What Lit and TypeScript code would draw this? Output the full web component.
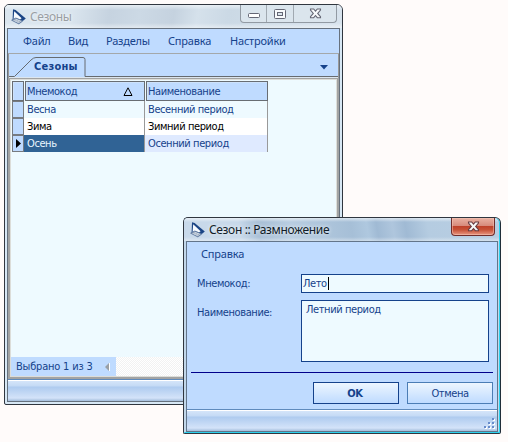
import { LitElement, html, css, svg } from "lit";
import { customElement } from "lit/decorators.js";

const logo = html`<svg class="logo" width="16" height="16" viewBox="0 0 16 16">
  <path d="M2 .3 4.6 1 14.8 9.4 10 13.6 1.6 11Z" fill="#1b4585"/>
  <path d="M3.2 2.2 10.6 9.2 9 10.4 5.6 9.2 2.6 10Z" fill="#f7fbff"/>
  <path d="M.6 11.2 4.8 9 11.6 11.8 8 15Z" fill="#93a3b8" stroke="#4d6c98" stroke-width=".7"/>
  <path d="M2.4 11.2 8.6 13.8M4.4 10.2l6 2.4M4.2 12.3l2.2-2M6.4 13.2l2.2-2" stroke="#e8eef5" stroke-width=".6"/>
</svg>`;

const cross = (fill: string, stroke: string) => html`<svg width="13" height="11" viewBox="0 0 13 11">
  <path d="M1.5 1h3.2l1.8 2.2L8.3 1h3.2v1L8.7 5.4l2.8 3.3v1H8.3L6.5 7.5 4.7 9.7H1.5v-1l2.8-3.3L1.5 2Z"
    fill=${fill} stroke=${stroke} stroke-width="1.1"/></svg>`;

const rows = [
  { code: "Весна", name: "Весенний период", kind: "odd" },
  { code: "Зима", name: "Зимний период", kind: "even" },
  { code: "Осень", name: "Осенний период", kind: "current" },
];

@customElement("app-root")
export class AppRoot extends LitElement {
  static styles = css`
    :host { display: block; position: relative; width: 508px; height: 442px; overflow: hidden;
      background: #fffbfa; color: #15428b; font: 11px/17px "DejaVu Sans Condensed", "DejaVu Sans", sans-serif; font-stretch: condensed; letter-spacing: -.4px; }
    * { box-sizing: border-box; }
    svg { display: block; }
    .window { position: absolute; display: flex; flex-direction: column; border: 1px solid #30363f; }
    .main { left: 4px; top: 4px; width: 339px; height: 401px; border-radius: 5px 6px 2px 2px; padding: 0 2px 2px;
      background: #d8e8f5; }
    .dialog { left: 183px; top: 217px; width: 318px; height: 217px; border-radius: 5px 6px 2px 2px; padding: 0 2px 1px;
      background: #c2d7ea; border-right-color: #202d38; box-shadow: inset -1px -1px #2bd2ef; }
    .title { display: flex; flex: none; height: 23px; margin: 0 -2px; padding-left: 6px; border-radius: 4px 5px 0 0; }
    .main .title { background: linear-gradient(#fff8 0, #fff0 5px 18px, #fff7), linear-gradient(100deg, #dae5ee 0 20%, #c6d3e0 31%, #ccd9e5 40%, #c5d2df 50%, #d5e1eb 57%, #cbd9e5 66%, #d8e3ed); }
    .dialog .title { box-shadow: inset -1px 0 #2bd2ef;
      background: linear-gradient(#fff9 0, #fff0 4px 19px, #fff6), linear-gradient(80deg, #c8d9ea 0 18%, #a7bed5 24%, #b8cde1 34%, #a6bfd7 53%, #afc8df 58%, #a0bad4 61%, #afc6dd 66%, #a0bad4 70%, #b5cce1 77%, #b9cee2); }
    .logo { margin: 4px 3px 0 0; }
    .caption { font: 12px/23px "Noto Sans", sans-serif; font-stretch: normal; }
    .main .caption { color: #999ea3; flex: 1; text-shadow: 0 0 3px #fff; }
    .dialog .caption { color: #111c28; flex: 1; text-shadow: 0 0 4px #fff; letter-spacing: -.35px; }
    .controls { display: grid; grid-template-columns: 26px 27px 43px; width: 97px; height: 18px; margin-right: 5px;
      border: 1px solid #929aa3; border-top: 0; border-radius: 0 0 4px 4px; background: #dbe5ed; }
    .control { display: grid; place-items: center; border-right: 1px solid #a1a9b1; }
    .control:first-child { padding-top: 3px; }
    .control:last-child { border: 0; }
    .close { display: grid; place-items: center; width: 44px; height: 18px; margin-right: 5px; border: 1px solid #702d2b; border-top: 0;
      border-radius: 0 0 4px 4px; background: linear-gradient(#eab1a2, #d78b7c 45%, #bd3e28 46%, #c75338 70%, #e99781); box-shadow: inset 0 0 0 1px #f6c5b588; }
    .client { flex: 1; min-height: 0; display: flex; flex-direction: column; border: 1px solid #66717e; background: #bfdbff; }
    .menu { display: grid; font-family: "Noto Sans", sans-serif; font-stretch: normal; flex: none; letter-spacing: -.2px; }
    .main .menu { height: 25px; grid-template-columns: 45px 38px 62px 62px 60px; padding: 3px 0 0 15px; border-bottom: 1px solid #a4a8aa; }
    .tabs { display: flex; flex: none; height: 24px; border: 1px solid #999; border-width: 0 1px; position: relative; }
    .tabs svg.edge { position: absolute; left: 0; top: 0; }
    .tab { position: relative; padding: 4px 0 0 25px; font-weight: bold; flex: 1; letter-spacing: .25px; }
    .arrow { margin: 11px 10px 0 0; }
    .frame { flex: 1; min-height: 0; display: flex; flex-direction: column; border: solid #a2a3a3; border-width: 1px 2px 2px;
      box-shadow: inset 0 0 0 1px #dcddd9; padding: 1px; background: #eefaff; }
    .body { flex: 1; padding: 1px 0 0 1px; }
    .table { display: grid; grid-template-columns: 12px 121px 123px; grid-template-rows: 20px repeat(3, 17px); width: 256px; }
    .head { background: #bfdbff; border: 1px solid #686d73; padding: 1px 0 0 2px; display: flex; box-shadow: inset 1px 1px #cde2fb; }
    .first { margin-left: 1px; padding-left: 1px; justify-content: space-between; }
    .second { margin-left: 1px; padding-left: 1px; }
    .sort { margin: 4px 11px 0 0; }
    .mark { background: #bfdbff; border: 1px solid #777b80; display: grid; place-items: center; }
    .cell { border-right: 1px solid #999; padding-left: 3px; }
    .odd { background: #eefaff; }
    .even { background: #fff; color: #000; }
    .current { background: #dfeaff; }
    .current.code { background: #306395; color: #eaf6ff; }
    .records { height: 19px; display: flex; background: repeating-conic-gradient(#f2f2f2 0 25%, #fff 0 50%) 0 0 / 2px 2px; }
    .count { width: 105px; padding: 1px 6px 0 5px; background: #bfdbff; display: flex; justify-content: space-between; letter-spacing: -.2px; }
    .count svg { margin-top: 5px; }
    .status { flex: none; border-top: 1px solid #5f8bbd; box-shadow: inset 0 1px #fff;
      background: linear-gradient(#d8e7fa, #c4daf5 6px, #aecbef 7px, #d4e3f9 18px, #a4bedc); display: flex; justify-content: flex-end; align-items: flex-end; }
    .main .status { height: 22px; }
    .dialog .status { height: 22px; padding: 0 2px 2px 0; }
    .dialog .client { border-color: #63758a; }
    .dialog .menu { height: 32px; padding: 3px 0 0 14px; }
    .form { display: grid; grid-template-columns: 104px 188px; grid-template-rows: 19px 62px; row-gap: 7px; padding-left: 10px; }
    .field { border: 1px solid #15428b; background: #eefaff; display: flex; padding-left: 1px; }
    .area { padding-left: 4px; }
    .caret { width: 1px; height: 13px; background: #000; margin: 2px 0 0 1px; }
    .label { padding-top: 1px; }
    .area-label { padding-top: 4px; }
    .rule { flex: none; height: 1px; background: #00008b; margin: 10px 4px 9px; }
    .buttons { display: flex; justify-content: flex-end; gap: 8px; padding-right: 4px; flex: 1; }
    .button { width: 86px; height: 22px; border: 1px solid #4b7db5; background: linear-gradient(#edf6ff, #bfdbff); text-align: center; line-height: 21px; }
    .ok { border-color: #15428b; font-weight: bold; padding-right: 2px; }
  `;

  render() {
    return html`
      <section class="window main">
        <header class="title">${logo}<span class="caption">Сезоны</span>
          <div class="controls">
            <span class="control"><svg width="12" height="5"><rect x=".5" y=".5" width="11" height="4" rx="1" fill="#fff" stroke="#656775"/></svg></span>
            <span class="control"><svg width="12" height="10"><rect x=".5" y=".5" width="11" height="9" rx="1" fill="#f8fafc" stroke="#656775"/><rect x="3.5" y="3.5" width="5" height="3" fill="#dce5ed" stroke="#656775"/></svg></span>
            <span class="control">${cross("#f8fafc", "#656775")}</span>
          </div>
        </header>
        <div class="client">
          <nav class="menu"><span>Файл</span><span>Вид</span><span>Разделы</span><span>Справка</span><span>Настройки</span></nav>
          <div class="tabs">
            <svg class="edge" width="329" height="24"><path d="M0 22.5h5.5L22 6q2.5-2.5 5-2.5h47q2 0 2 2v17h253" fill="none" stroke="#666b70"/><path d="M0 23.5h329" stroke="#dce6ef"/></svg>
            <span class="tab">Сезоны</span>
            <svg class="arrow" width="8" height="5"><path d="M0 0h8L4 4.5Z" fill="#15428b"/></svg>
          </div>
          <div class="frame">
            <div class="body">
              <div class="table">
                <span class="head"></span>
                <span class="head first">Мнемокод<svg class="sort" width="10" height="9"><path d="M1 8.5h8L5 .8Z" fill="none" stroke="#000"/></svg></span>
                <span class="head second">Наименование</span>
                ${rows.map(r => html`
                  <span class="mark">${r.kind === "current" ? html`<svg width="5" height="9"><path d="M0 0v9l5-4.5Z"/></svg>` : ""}</span>
                  <span class="cell code ${r.kind}">${r.code}</span>
                  <span class="cell ${r.kind}">${r.name}</span>`)}
              </div>
            </div>
            <div class="records"><div class="count">Выбрано 1 из 3<svg width="5" height="8"><path d="M4 0v8L0 4Z" fill="#999fa6"/><path d="M4.5 0v8" stroke="#fff"/></svg></div></div>
          </div>
          <div class="status"></div>
        </div>
      </section>

      <section class="window dialog">
        <header class="title">${logo}<span class="caption">Сезон :: Размножение</span><span class="close">${cross("#f7f7f7", "#673c42")}</span></header>
        <div class="client">
          <nav class="menu"><span>Справка</span></nav>
          <div class="form">
            <span class="label">Мнемокод:</span>
            <div class="field">Лето<i class="caret"></i></div>
            <span class="area-label">Наименование:</span>
            <div class="field area">Летний период</div>
          </div>
          <div class="rule"></div>
          <div class="buttons"><div class="button ok">OK</div><div class="button">Отмена</div></div>
          <div class="status"><svg width="11" height="11">
            ${[[8, 0], [4, 4], [8, 4], [0, 8], [4, 8], [8, 8]].map(([x, y]) => svg`<rect x=${x + 1} y=${y + 1} width="2" height="2" fill="#fff"/><rect x=${x} y=${y} width="2" height="2" fill="#678ccb"/>`)}
          </svg></div>
        </div>
      </section>`;
  }
}
